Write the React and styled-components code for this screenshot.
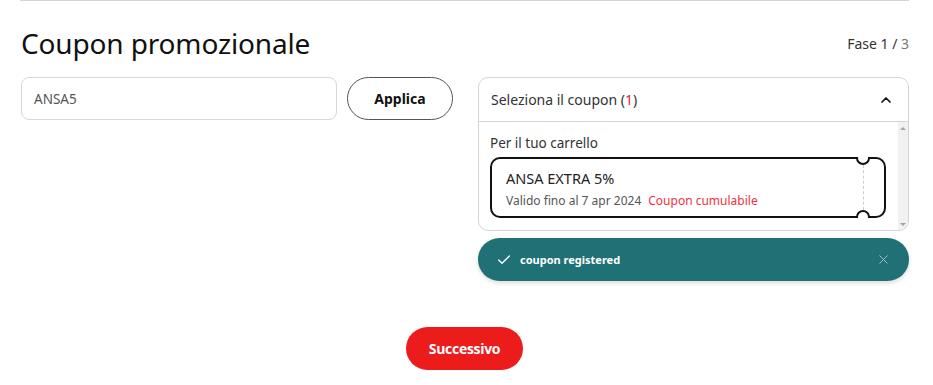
import styled, { createGlobalStyle } from "styled-components";
import { Check, X, ChevronUp } from "lucide-react";

const GlobalStyle = createGlobalStyle`
  body {
    margin: 0;
    background: #fff;
    font-family: "Noto Sans", "Liberation Sans", sans-serif;
    color: #111;
  }
`;

const Page = styled.div`
  width: 889px;
  margin-left: 20px;
  border-top: 1px solid #d5d5d5;
`;

const TitleRow = styled.div`
  display: flex;
  align-items: center;
  justify-content: space-between;
  margin-top: 22px;
  height: 40px;
`;

const Title = styled.h1`
  margin: 0 0 0 1px;
  font-size: 28px;
  font-weight: 400;
  color: #111;
  letter-spacing: -0.15px;
`;

const Step = styled.div`
  font-size: 14px;
  color: #333;

  span {
    color: #777;
  }
`;

const Columns = styled.div`
  display: flex;
  gap: 25px;
  margin-top: 14px;
`;

const Form = styled.div`
  display: flex;
  gap: 10px;
  margin-left: 1px;
  width: 432px;
`;

const CodeInput = styled.div`
  box-sizing: border-box;
  width: 316px;
  height: 43px;
  border: 1px solid #d7d7d7;
  border-radius: 8px;
  padding: 0 12px;
  display: flex;
  align-items: center;
  font-size: 13.5px;
  color: #555;
`;

const OutlineButton = styled.button`
  box-sizing: border-box;
  width: 106px;
  height: 43px;
  border: 1px solid #555;
  border-radius: 22px;
  background: #fff;
  font-family: inherit;
  font-size: 14px;
  font-weight: 700;
  color: #111;
`;

const Side = styled.div`
  width: 432px;
  display: flex;
  flex-direction: column;
  gap: 7px;
`;

const Panel = styled.div`
  border: 1px solid #d5d5d5;
  border-radius: 10px;
  overflow: hidden;
`;

const PanelHeader = styled.div`
  height: 43px;
  display: flex;
  align-items: center;
  justify-content: space-between;
  padding: 0 14px 0 12px;
  border-bottom: 1px solid #d5d5d5;
  font-size: 14px;
  color: #333;
`;

const Count = styled.span`
  color: #e3232f;
`;

const PanelBody = styled.div`
  display: flex;
  height: 108px;
`;

const List = styled.div`
  flex: 1;
  padding: 12px 12px 0 11px;
`;

const ListLabel = styled.div`
  font-size: 13.5px;
  color: #333;
  margin-bottom: 5px;
`;

const Ticket = styled.div`
  position: relative;
  box-sizing: border-box;
  height: 61px;
  border: 2px solid #111;
  border-radius: 10px;
  padding: 9px 14px 0;

  &::before,
  &::after {
    content: "";
    position: absolute;
    right: 14px;
    width: 10px;
    height: 10px;
    border: 2px solid #111;
    border-radius: 50%;
    background: #fff;
  }

  &::before {
    top: -8px;
    clip-path: inset(6px 0 0 0);
  }

  &::after {
    bottom: -8px;
    clip-path: inset(0 0 6px 0);
  }
`;

const Perforation = styled.div`
  position: absolute;
  right: 20px;
  top: 6px;
  bottom: 6px;
  border-left: 1px dashed #ccc;
`;

const TicketName = styled.div`
  font-size: 14.5px;
  color: #222;
  line-height: 20px;
`;

const TicketMeta = styled.div`
  margin-top: 4px;
  font-size: 12px;
  color: #555;

  span {
    margin-left: 7px;
    color: #ef3340;
  }
`;

const Scrollbar = styled.div`
  width: 10px;
  background: #f1f1f1;
  display: flex;
  flex-direction: column;
  justify-content: space-between;
  align-items: center;
  padding: 5px 0 4px;
`;

const Arrow = styled.div`
  width: 0;
  height: 0;
  border-left: 3px solid transparent;
  border-right: 3px solid transparent;
  ${(p) =>
    p.$down ? "border-top: 3px solid #a3a3a3;" : "border-bottom: 3px solid #a3a3a3;"}
`;

const Toast = styled.div`
  height: 43px;
  border-radius: 22px;
  background: #1f7176;
  box-shadow: 0 2px 4px rgba(0, 0, 0, 0.15);
  display: flex;
  align-items: center;
  padding: 0 18px;
  color: #fff;
  font-size: 11px;
  font-weight: 700;
`;

const ToastText = styled.div`
  flex: 1;
  margin-left: 8px;
`;

const Footer = styled.div`
  display: flex;
  justify-content: center;
  margin-top: 46px;
`;

const PrimaryButton = styled.button`
  width: 117px;
  height: 43px;
  border: none;
  border-radius: 22px;
  background: #ec1c1c;
  color: #fff;
  font-family: "Open Sans", sans-serif;
  font-size: 14px;
  font-weight: 700;
  letter-spacing: -0.3px;
`;

export default function App() {
  return (
    <>
      <GlobalStyle />
      <Page>
        <TitleRow>
          <Title>Coupon promozionale</Title>
          <Step>
            Fase 1 / <span>3</span>
          </Step>
        </TitleRow>
        <Columns>
          <Form>
            <CodeInput>ANSA5</CodeInput>
            <OutlineButton>Applica</OutlineButton>
          </Form>
          <Side>
            <Panel>
              <PanelHeader>
                <div>
                  Seleziona il coupon (<Count>1</Count>)
                </div>
                <ChevronUp size={16} strokeWidth={2.6} color="#111" />
              </PanelHeader>
              <PanelBody>
                <List>
                  <ListLabel>Per il tuo carrello</ListLabel>
                  <Ticket>
                    <Perforation />
                    <TicketName>ANSA EXTRA 5%</TicketName>
                    <TicketMeta>
                      Valido fino al 7 apr 2024<span>Coupon cumulabile</span>
                    </TicketMeta>
                  </Ticket>
                </List>
                <Scrollbar>
                  <Arrow />
                  <Arrow $down />
                </Scrollbar>
              </PanelBody>
            </Panel>
            <Toast>
              <Check size={16} strokeWidth={2} color="#fff" />
              <ToastText>coupon registered</ToastText>
              <X size={15} strokeWidth={1.6} color="#9cc2c4" />
            </Toast>
          </Side>
        </Columns>
        <Footer>
          <PrimaryButton>Successivo</PrimaryButton>
        </Footer>
      </Page>
    </>
  );
}
